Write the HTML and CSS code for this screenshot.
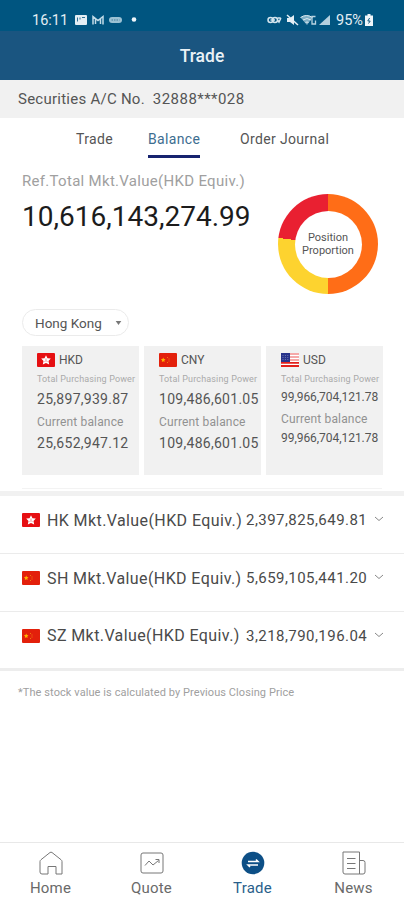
FILE: index.html
```html
<!DOCTYPE html>
<html lang="en">
<head>
  <meta charset="UTF-8">
  <meta name="viewport" content="width=device-width, initial-scale=1.0">
  <title>Trade</title>
  <link rel="stylesheet" href="styles.css">
</head>
<body>
  <!-- shared flag symbols -->
  <svg class="defs" width="0" height="0">
    <symbol id="flag-hk" viewBox="0 0 18 14">
      <rect width="18" height="14" rx="1" fill="#e60f12"/>
      <path d="M9 2.2l1.500 3 3.300.4-2.300 2.300.7 3.600L9 9.900l-3.200 1.600.7-3.600-2.300-2.300 3.300-.4z" fill="#fff"/>
      <path d="M9 5.500v1.500M7.500 9L9 7.400 10.500 9" stroke="#e8686a" stroke-width=".7" fill="none"/>
    </symbol>
    <symbol id="flag-cn" viewBox="0 0 18 14">
      <rect width="18" height="14" rx="1" fill="#e3200b"/>
      <path d="M4.200 4.500l.7 1.500 1.600.2-1.200 1.200.3 1.600-1.400-.8-1.400.8.3-1.600L1.900 6.200l1.600-.2z" fill="#ffb400"/>
      <path d="M8 4.500h1M9.500 6h1M9.500 8h1M8 9.500h1" stroke="#ee7a10"/>
    </symbol>
    <symbol id="flag-us" viewBox="0 0 18 14">
      <rect width="18" height="14" fill="#fff"/>
      <path d="M0 1h18M0 4h18M0 7h18" stroke="#f28c8c" stroke-width="1.500"/>
      <path d="M0 9.800h18M0 13h18" stroke="#e3201b" stroke-width="1.800"/>
      <rect width="9" height="9" fill="#27338a"/>
      <path d="M1.500 2.500h6M1.500 4.500h6M1.500 6.500h6" stroke="#7d86bd" stroke-width=".8" stroke-dasharray="1 1.400"/>
    </symbol>
  </svg>

  <div class="app">
    <div class="status-bar">
      <span class="time">16:11</span>
      <svg class="status-left" width="64" height="12" viewBox="0 0 64 12">
        <rect x="0" y="1" width="12" height="10" rx="1" fill="#e3eef4"/>
        <path d="M2.500 7.500v-4M5 3.500v2M7 3.500h3" stroke="#2d6f93" fill="none"/>
        <path d="M18 10.500V2.500l5 4 5-4v8M20.500 10V5M25.500 10V5" stroke="#c2dce8" stroke-width="1.500" fill="none"/>
        <rect x="34" y="3" width="13" height="6" rx="3" fill="#9cc2d4"/>
        <path d="M36.500 6h8" stroke="#447e9c" stroke-dasharray="1.500 1"/>
        <circle cx="59" cy="5.500" r="2.300" fill="#eef6fa"/>
      </svg>
      <svg class="status-right" width="65" height="14" viewBox="0 0 65 14">
        <g fill="none" stroke="#d5e6ee" stroke-width="1.500">
          <circle cx="3.500" cy="7" r="2.500"/>
          <circle cx="8" cy="7" r="2.500"/>
          <path d="M3.500 7h4.500M10.500 5h2.500q1 0 .5 1L12 9l-1.500-2"/>
        </g>
        <path d="M20 5h3L27 2v10l-4-3h-3z" fill="#e3eef4"/>
        <path d="M20 2l11 10" stroke="#e3eef4" stroke-width="1.500"/>
        <path d="M33.500 4.500q6-4.500 12 0L40 12z" fill="#7fafc6"/>
        <path d="M33.500 4.500q6-4 12 0M36 7q4-3 8 0M38.500 9.500q1.500-1 3 0" stroke="#dceaf1" fill="none"/>
        <path d="M48.500 3.500H45v7.500h3.500V7.500" stroke="#b9d4e1" stroke-width="1.300" fill="none"/>
        <path d="M52 12L63 2v10z" fill="#b4d0de"/>
      </svg>
      <span class="battery-text">95%</span>
      <svg class="battery" width="8" height="12" viewBox="0 0 8 12">
        <path d="M2.500 0h3v1.500H8V12H0V1.500h2.500z" fill="#eef6fa"/>
        <path d="M4.600 4L2.800 7h2.400L3.500 9.500" stroke="#13587c" fill="none"/>
      </svg>
    </div>

    <header class="header">Trade</header>

    <div class="account"><span>Securities A/C No.</span><span class="account-no">32888***028</span></div>

    <nav class="tabs">
      <a class="tab tab-trade">Trade</a>
      <a class="tab tab-balance active">Balance</a>
      <a class="tab tab-journal">Order Journal</a>
    </nav>

    <section class="summary">
      <div class="total">
        <div class="total-label">Ref.Total Mkt.Value(HKD Equiv.)</div>
        <div class="total-value">10,616,143,274.99</div>
      </div>
      <div class="donut">
        <div class="donut-label"><span>Position</span><span>Proportion</span></div>
      </div>
    </section>

    <div class="market-select">
      <span>Hong Kong</span>
      <svg width="7" height="4" viewBox="0 0 8 5"><path d="M.5 0h7L4 5z" fill="#777"/></svg>
    </div>

    <section class="cards">
      <div class="card">
        <div class="currency"><svg class="flag"><use href="#flag-hk"/></svg><span>HKD</span></div>
        <div class="power-label">Total Purchasing Power</div>
        <div class="amount">25,897,939.87</div>
        <div class="balance-label">Current balance</div>
        <div class="amount">25,652,947.12</div>
      </div>
      <div class="card">
        <div class="currency"><svg class="flag"><use href="#flag-cn"/></svg><span>CNY</span></div>
        <div class="power-label">Total Purchasing Power</div>
        <div class="amount">109,486,601.05</div>
        <div class="balance-label">Current balance</div>
        <div class="amount">109,486,601.05</div>
      </div>
      <div class="card compact">
        <div class="currency"><svg class="flag"><use href="#flag-us"/></svg><span>USD</span></div>
        <div class="power-label">Total Purchasing Power</div>
        <div class="amount">99,966,704,121.78</div>
        <div class="balance-label">Current balance</div>
        <div class="amount">99,966,704,121.78</div>
      </div>
    </section>

    <section class="markets">
      <div class="market">
        <svg class="flag"><use href="#flag-hk"/></svg>
        <span class="market-name">HK Mkt.Value(HKD Equiv.)</span>
        <span class="market-value">2,397,825,649.81</span>
        <svg class="chevron" width="10" height="6" viewBox="0 0 10 6"><path d="M1 1l4 3.500L9 1"/></svg>
      </div>
      <div class="market">
        <svg class="flag"><use href="#flag-cn"/></svg>
        <span class="market-name">SH Mkt.Value(HKD Equiv.)</span>
        <span class="market-value">5,659,105,441.20</span>
        <svg class="chevron" width="10" height="6" viewBox="0 0 10 6"><path d="M1 1l4 3.500L9 1"/></svg>
      </div>
      <div class="market">
        <svg class="flag"><use href="#flag-cn"/></svg>
        <span class="market-name">SZ Mkt.Value(HKD Equiv.)</span>
        <span class="market-value">3,218,790,196.04</span>
        <svg class="chevron" width="10" height="6" viewBox="0 0 10 6"><path d="M1 1l4 3.500L9 1"/></svg>
      </div>
    </section>

    <p class="note">*The stock value is calculated by Previous Closing Price</p>

    <nav class="bottom-nav">
      <a class="nav-item">
        <svg width="24" height="24" viewBox="0 0 24 24"><path d="M1 10.500Q1 9.500 2 8.700L11 1.500q1-.7 2 0l9 7.200q1 .8 1 1.800V23h-6v-7.500H9V23H3q-2 0-2-2z"/></svg>
        <span>Home</span>
      </a>
      <a class="nav-item">
        <svg width="24" height="24" viewBox="0 0 24 24"><rect x="1" y="2" width="22" height="20" rx="2"/><path d="M5 14.500l4-4.500 4 4 5.500-4.500M15.500 8.500H19V12"/></svg>
        <span>Quote</span>
      </a>
      <a class="nav-item active">
        <svg width="24" height="24" viewBox="0 0 24 24"><circle cx="12" cy="12" r="11.300" fill="#0d4f86" stroke="none"/><path d="M7 10.500h10L15 8.500M17 14H7l2 2" stroke="#fff" stroke-width="1.500"/></svg>
        <span>Trade</span>
      </a>
      <a class="nav-item">
        <svg width="24" height="24" viewBox="0 0 24 24"><path d="M17.500 23H3q-2 0-2-2V1h16.500zM17.500 9.500H21q2 0 2 2V21q0 2-2 2h-3.500M5 7.500h8.500M5 12.500h8.500M5 17.500h8.500"/></svg>
        <span>News</span>
      </a>
    </nav>
  </div>
</body>
</html>
```
FILE: styles.css
```css
* {
  box-sizing: border-box;
}

body {
  margin: 0;
  font-family: Roboto, "Liberation Sans", sans-serif;
  background-color: #fff;
  color: #555;
}

.defs {
  display: block;
}

.app {
  display: flex;
  flex-direction: column;
  width: 404px;
  height: 900px;
  overflow: hidden;
  white-space: nowrap;
}

.app svg {
  flex: none;
}

.status-bar {
  display: flex;
  align-items: center;
  height: 31px;
  padding: 9px 30px 0 32px;
  background-color: #005580;
  color: #e3eef4;
  font-size: 14.500px;
}

.time {
  width: 43px;
}

.status-right {
  margin-left: 128px;
}

.battery-text {
  width: 29px;
  margin-left: 4px;
}

.header {
  height: 49px;
  background-color: #1a5580;
  color: #e9f1f6;
  font-size: 17.500px;
  font-weight: 500;
  line-height: 50px;
  text-align: center;
}

.account {
  display: flex;
  gap: 8px;
  height: 38px;
  padding-left: 18px;
  background-color: #f1f1f1;
  font-size: 15px;
  line-height: 38px;
  letter-spacing: 0.25px;
}

.account-no {
  letter-spacing: 0.45px;
}

.tabs {
  display: flex;
  height: 40px;
  padding-left: 76px;
  font-size: 14px;
  line-height: 42px;
}

.tab {
  height: 40px;
  letter-spacing: 0.35px;
}

.tab-trade {
  width: 72px;
}

.tab-balance {
  width: 52px;
  margin-right: 40px;
}

.tab.active {
  border-bottom: 3px solid #17236f;
  color: #3d6d90;
}

.summary {
  display: flex;
  justify-content: space-between;
  height: 151px;
  padding: 12px 26px 0 22px;
}

.total-label {
  color: #a0a0a0;
  font-size: 15px;
  line-height: 22px;
  letter-spacing: 0.3px;
}

.total-value {
  margin-top: 9px;
  color: #1c1c1c;
  font-size: 28px;
  line-height: 32px;
}

.donut {
  display: flex;
  align-items: center;
  justify-content: center;
  width: 100px;
  height: 100px;
  margin-top: 24px;
  border-radius: 50%;
  background: conic-gradient(#ff6d17 0 180deg, #fdd32f 180deg 277deg, #e92031 277deg);
}

.donut-label {
  display: flex;
  flex-direction: column;
  align-items: center;
  justify-content: center;
  width: 67px;
  height: 67px;
  border-radius: 50%;
  background-color: #fff;
  font-size: 11px;
  line-height: 13px;
}

.market-select {
  display: flex;
  align-items: center;
  justify-content: space-between;
  width: 107px;
  height: 27px;
  margin-left: 22px;
  padding: 0 6px 0 12px;
  border: 1px solid #ebebeb;
  border-radius: 14px;
  font-size: 13.500px;
}

.cards {
  display: grid;
  grid-template-columns: repeat(3, 117px);
  gap: 5px;
  height: 143px;
  margin: 10px 22px 0;
  padding-bottom: 13px;
  border-bottom: 1px solid #f3f3f3;
}

.card {
  padding: 5px 0 0 15px;
  background-color: #f1f1f1;
}

.flag {
  width: 18px;
  height: 14px;
}

.currency {
  display: flex;
  align-items: center;
  gap: 4px;
  height: 18px;
  font-size: 12px;
}

.power-label {
  height: 20px;
  color: #aaa;
  font-size: 9px;
  line-height: 20px;
  letter-spacing: 0.15px;
}

.amount {
  height: 21px;
  font-size: 14px;
  line-height: 20px;
  letter-spacing: 0.28px;
}

.balance-label {
  height: 23px;
  color: #919191;
  font-size: 12px;
  line-height: 24px;
  letter-spacing: 0.15px;
}

.compact .amount {
  height: 18px;
  font-size: 12px;
  line-height: 16px;
  letter-spacing: -0.05px;
}

.markets {
  margin-top: 2px;
  border-top: 5px solid #f1f1f1;
  border-bottom: 3px solid #ededed;
}

.market {
  display: flex;
  align-items: center;
  height: 58px;
  padding: 0 20px 9px 22px;
  border-bottom: 1px solid #ebebeb;
  color: #4a4a4a;
  font-size: 16px;
}

.market:last-child {
  height: 56px;
  border-bottom: none;
}

.market-name {
  width: 199px;
  margin-left: 7px;
  letter-spacing: 0.4px;
}

.market-value {
  width: 128px;
  font-size: 15px;
  letter-spacing: 0.45px;
}

.chevron {
  margin-bottom: 2px;
  fill: none;
  stroke: #888;
}

.note {
  margin: 14px 0 0 18px;
  color: #a0a0a0;
  font-size: 11px;
  line-height: 16px;
  letter-spacing: 0.08px;
}

.bottom-nav {
  display: grid;
  grid-template-columns: repeat(4, 101px);
  height: 58px;
  margin-top: auto;
  padding-top: 8px;
  border-top: 1px solid #e8e8e8;
  color: #6a6a6a;
  font-size: 15px;
  letter-spacing: 0.2px;
}

.nav-item {
  display: flex;
  flex-direction: column;
  align-items: center;
}

.nav-item svg {
  fill: none;
  stroke: #777;
}

.nav-item span {
  margin-top: 4px;
  line-height: 18px;
}

.nav-item.active {
  color: #2a5f8b;
}
```
